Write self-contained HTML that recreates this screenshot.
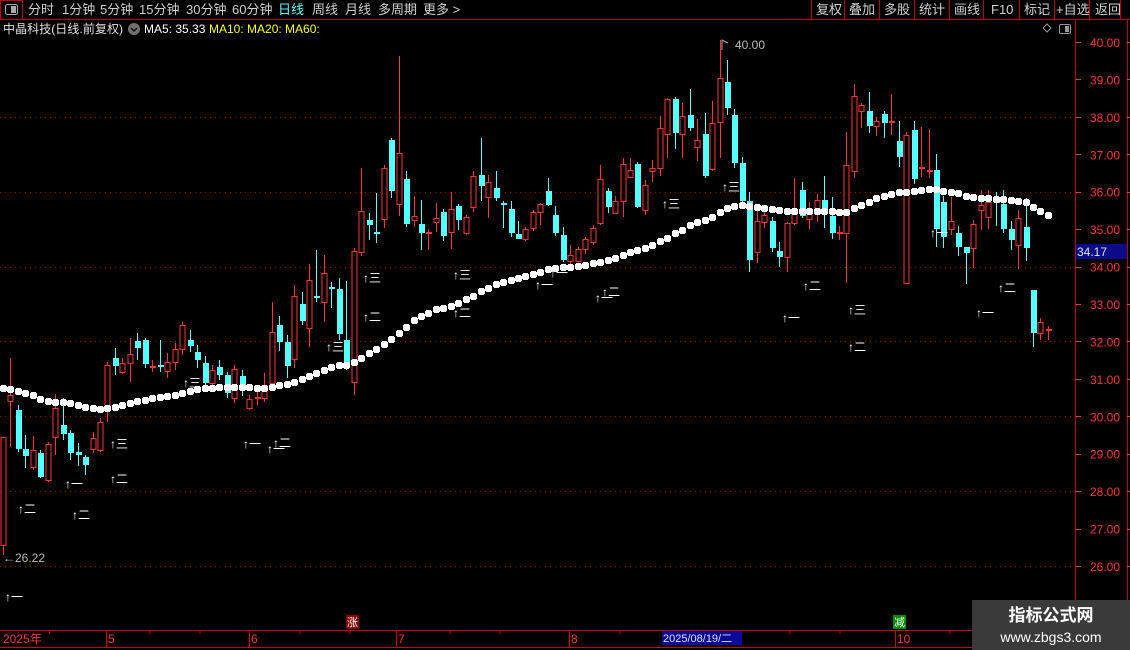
<!DOCTYPE html>
<html><head><meta charset="utf-8"><style>
html,body{margin:0;padding:0;background:#000;width:1130px;height:650px;overflow:hidden;font-family:"Liberation Sans","Noto Sans CJK SC",sans-serif}
</style></head><body>
<svg id="s" width="1130" height="650" style="position:absolute;left:0;top:0" xmlns="http://www.w3.org/2000/svg" font-family="Liberation Sans, Noto Sans CJK SC, sans-serif">
<rect width="1130" height="650" fill="#000"/>
<line x1="0" y1="19.5" x2="1130" y2="19.5" stroke="#c00000"/>
<rect x="0.5" y="0.5" width="22" height="19" fill="none" stroke="#c00000"/>
<rect x="5.5" y="4.5" width="12" height="10" rx="2" fill="none" stroke="#aaa"/>
<rect x="11" y="6" width="5" height="7" fill="#aaa"/>
<g font-size="13" fill="#d0d0d0">
<text x="28" y="14">分时</text><text x="62" y="14">1分钟</text><text x="100" y="14">5分钟</text><text x="139" y="14">15分钟</text><text x="186" y="14">30分钟</text><text x="232" y="14">60分钟</text><text x="278" y="14" fill="#54ffff">日线</text><text x="312" y="14">周线</text><text x="345" y="14">月线</text><text x="378" y="14">多周期</text><text x="423" y="14">更多 &gt;</text>
<text x="816" y="14">复权</text><text x="849" y="14">叠加</text><text x="884" y="14">多股</text><text x="919" y="14">统计</text><text x="954" y="14">画线</text><text x="991" y="14">F10</text><text x="1024" y="14">标记</text><text x="1056" y="14">+自选</text><text x="1095" y="14">返回</text>
</g>
<g stroke="#c00000">
<line x1="811.5" y1="0" x2="811.5" y2="19"/><line x1="844.5" y1="0" x2="844.5" y2="19"/><line x1="879.5" y1="0" x2="879.5" y2="19"/><line x1="914.5" y1="0" x2="914.5" y2="19"/><line x1="949.5" y1="0" x2="949.5" y2="19"/><line x1="983.5" y1="0" x2="983.5" y2="19"/><line x1="1019.5" y1="0" x2="1019.5" y2="19"/><line x1="1054.5" y1="0" x2="1054.5" y2="19"/><line x1="1089.5" y1="0" x2="1089.5" y2="19"/><line x1="1120.5" y1="0" x2="1120.5" y2="19"/>
</g>
<text x="3" y="33" font-size="12" fill="#e0e0e0" textLength="120">中晶科技(日线.前复权)</text>
<circle cx="134" cy="29" r="6" fill="#707070"/><path d="M131 28l3 3 3-3" stroke="#111" stroke-width="1.5" fill="none"/>
<text x="144" y="33" font-size="12" fill="#fff">MA5: 35.33</text>
<text x="209" y="33" font-size="12" fill="#ffff00">MA10: MA20: MA60:</text>
<path d="M1047 24l4 4-4 4-4-4z" fill="none" stroke="#999"/>
<rect x="1059.5" y="24.5" width="11" height="9" rx="1.5" fill="none" stroke="#999"/><rect x="1065" y="26" width="4" height="6" fill="#999"/>
<line x1="1075.5" y1="20" x2="1075.5" y2="650" stroke="#c00000"/>
<line x1="1127.5" y1="20" x2="1127.5" y2="650" stroke="#c00000"/>
<g id="grid"></g>
<g id="axis" font-size="12" fill="#ff3232"></g>
<rect x="1076" y="244" width="51" height="15" fill="#0a0a8a"/>
<text x="1077" y="256" font-size="12" fill="#e0e0e0">34.17</text>
<g id="cand"></g>
<g id="dots" fill="#fff"></g>
<g id="mk" font-size="12" fill="#fff"></g>
<path d="M722 50V40l6 3" stroke="#aaa" fill="none"/><text x="735" y="49" font-size="12" fill="#bbb">40.00</text>
<text x="3" y="562" font-size="12" fill="#bbb">←26.22</text>
<line x1="0" y1="630.5" x2="1075" y2="630.5" stroke="#d00000"/>
<line x1="0" y1="647.5" x2="1075" y2="647.5" stroke="#d00000"/>
<g stroke="#d00000"><line x1="49.5" y1="631" x2="49.5" y2="634"/><line x1="106.5" y1="631" x2="106.5" y2="647"/><line x1="249.5" y1="631" x2="249.5" y2="647"/><line x1="396.5" y1="631" x2="396.5" y2="647"/><line x1="569.5" y1="631" x2="569.5" y2="647"/><line x1="895.5" y1="631" x2="895.5" y2="647"/><line x1="150" y1="631" x2="150" y2="634"/><line x1="200" y1="631" x2="200" y2="634"/><line x1="300" y1="631" x2="300" y2="634"/><line x1="350" y1="631" x2="350" y2="634"/><line x1="450" y1="631" x2="450" y2="634"/><line x1="500" y1="631" x2="500" y2="634"/><line x1="620" y1="631" x2="620" y2="634"/><line x1="790" y1="631" x2="790" y2="634"/><line x1="840" y1="631" x2="840" y2="634"/><line x1="950" y1="631" x2="950" y2="634"/><line x1="1000" y1="631" x2="1000" y2="634"/></g>
<g font-size="12" fill="#ff3232"><text x="3" y="643">2025年</text><text x="108" y="643">5</text><text x="251" y="643">6</text><text x="398" y="643">7</text><text x="571" y="643">8</text><text x="897" y="643">10</text></g>
<rect x="662" y="631" width="80" height="14" fill="#0a0a9a"/><text x="663" y="642" font-size="11" fill="#e0e0e0">2025/08/19/二</text>
<rect x="346" y="615" width="13" height="14" fill="#8a0000"/><text x="347" y="626" font-size="11" fill="#fff">涨</text>
<rect x="893" y="615" width="13" height="14" fill="#008a00"/><text x="894" y="626" font-size="11" fill="#fff">减</text>
<rect x="972" y="600" width="158" height="50" fill="#3a3a3a"/>
<text x="1051" y="621" font-size="17" font-weight="bold" fill="#fff" text-anchor="middle">指标公式网</text>
<text x="1051" y="642" font-size="14" fill="#fff" text-anchor="middle">www.zbgs3.com</text>
</svg>
<script>
var NS="http://www.w3.org/2000/svg";
function el(g,t,a,txt){var e=document.createElementNS(NS,t);for(var k in a)e.setAttribute(k,a[k]);if(txt)e.textContent=txt;document.getElementById(g).appendChild(e);return e;}
function py(p){return 42+(40-p)*37.43;}
for(var p=26;p<=40;p++){var y=py(p);el('axis','line',{x1:1076,x2:1081,y1:Math.round(y)+.5,y2:Math.round(y)+.5,stroke:'#ff3232'});
 el('axis','text',{x:1090,y:y+5},p.toFixed(2));
 el('axis','line',{x1:1127,x2:1130,y1:Math.round(y)+.5,y2:Math.round(y)+.5,stroke:'#ff3232'});
 if(p%2==0&&p<40)el('grid','line',{x1:0,x2:1075,y1:Math.round(y)+.5,y2:Math.round(y)+.5,stroke:'#a00000','stroke-dasharray':'1,4'});}
var D=[
['r',437,545,437,555],['r',395,401,358,447],['c',410,449,405,452],['c',449,456,435,468],['r',450,467,436,470],['c',453,477,450,478],['r',444,480,442,482],['r',408,437,394,455],['c',425,434,398,440],['c',433,453,430,460],
['c',452,455,443,466],['c',457,465,455,475],['r',438,449,432,453],['r',422,450,418,452],['r',365,407,362,422],['c',358,366,348,375],['r',363,372,358,374],['r',354,363,338,382],['c',341,348,333,360],['c',340,364,338,368],
['r',366,368,360,372],['c',365,367,340,372],['r',362,371,353,378],['r',349,362,343,370],['r',325,349,322,355],['c',340,346,330,352],['c',352,360,345,368],['c',363,383,356,387],['r',370,383,365,388],['c',367,375,360,380],
['c',375,393,372,398],['r',369,398,365,403],['c',376,390,370,396],['r',399,408,395,410],['r',397,399,390,405],['r',385,398,373,402],['r',332,383,302,385],['c',325,342,316,351],['c',342,366,335,378],['r',296,359,285,368],
['c',304,321,292,325],['r',280,328,264,347],['c',296,298,250,302],['r',273,302,255,322],['c',287,289,282,308],['c',289,334,278,340],['c',340,368,281,370],['r',251,382,248,395],['r',211,252,168,256],['c',220,225,213,240],
['c',232,234,193,243],['r',168,219,165,228],['c',140,191,138,198],['r',153,204,56,216],['c',179,224,171,227],['r',216,220,196,227],['c',224,233,200,250],['r',232,233,229,250],['r',218,222,203,232],['c',212,236,209,241],
['r',209,232,192,249],['c',206,220,204,230],['r',217,233,215,235],['r',176,207,171,212],['c',175,186,138,201],['r',182,197,175,218],['c',188,198,171,201],['c',203,205,201,228],['c',209,233,201,237],['c',234,239,221,239],
['r',229,239,227,241],['r',212,228,210,231],['r',204,212,203,225],['c',191,205,178,206],['c',215,233,206,236],['c',235,260,227,262],['r',255,261,245,265],['r',249,261,247,262],['r',239,249,237,254],['r',228,242,225,245],
['r',179,223,165,225],['c',191,207,188,213],['r',201,213,196,213],['r',164,201,158,217],['r',170,177,158,178],['c',164,207,162,208],['r',185,210,180,215],['r',168,171,160,182],['r',128,168,116,176],['r',99,134,98,158],
['c',99,133,97,149],['r',116,134,103,158],['c',115,128,89,131],['r',140,147,119,161],['c',134,176,113,178],['r',123,169,101,171],['r',78,122,40,158],['c',82,108,60,115],['c',115,163,109,168],['c',163,201,157,203],
['c',201,260,192,272],['r',221,252,209,263],['r',215,222,209,228],['c',221,248,217,252],['c',251,257,242,267],['r',223,257,222,272],['r',214,223,178,225],['c',190,216,182,218],['r',213,219,202,229],['r',200,213,194,222],
['c',200,213,176,228],['c',216,233,197,239],['r',232,234,226,240],['r',165,233,132,283],['r',96,171,84,178],['r',105,111,103,128],['c',111,126,92,133],['r',121,126,117,136],['c',114,123,111,138],['r',121,123,94,135],
['c',141,157,121,167],['r',135,283,132,283],['c',130,179,121,184],['r',167,169,127,177],['r',170,172,129,178],['c',170,229,154,247],['c',202,237,196,248],['r',221,229,197,235],['c',233,247,226,256],['c',247,253,247,284],
['r',224,248,220,268],['r',205,210,190,230],['r',202,217,190,229],['c',201,203,192,226],['c',204,229,190,233],['c',229,240,221,250],['r',218,245,210,269],['c',227,248,198,261],['c',290,333,290,347],['r',322,333,318,340],['r',329,331,326,340]];
D.forEach(function(d,i){var x=Math.round(3+i*7.464);var col=d[0]=='r'?'#ff3232':'#54ffff';
 el('cand','line',{x1:x+.5,x2:x+.5,y1:d[3],y2:d[4],stroke:col});
 var h=Math.max(1,d[2]-d[1]);
 if(d[0]=='r'){ if(h<3) el('cand','rect',{x:x-2,y:d[1],width:6,height:2,fill:col}); else el('cand','rect',{x:x-2,y:d[1]+.5,width:5,height:h,fill:'#000',stroke:col});}
 else el('cand','rect',{x:x-2,y:d[1],width:6,height:Math.max(2,h),fill:col});
});
var K=[[0,388],[34,389],[55,391],[79,393],[100,395],[124,400],[145,401],[166,402],[190,402],[211,403],[235,405],[256,407],[280,408],[301,409],[325,408],[346,407],[370,405],[391,403],[415,401],[436,400],[460,398],[482,397],[502,396],[526,395],[547,393],[571,391],[592,389],[616,388],[682,387],[727,387],[796,388]].map(function(a){return [a[0]/3,a[1]];});
K=K.concat([[272,387],[279,385],[287,384],[294,382],[302,379],[309,376],[317,373],[324,370],[332,367],[339,365],[347,365],[354,362],[362,357],[369,353],[377,348],[385,343],[392,338],[400,332],[407,326],[415,319],[422,315],[430,312],[437,309],[444,308],[451,306],[459,302],[466,299],[474,296],[481,291],[488,288],[496,284],[503,282],[511,280],[518,278],[526,276],[533,274],[541,272],[548,269],[556,268],[563,267],[571,267],[578,266],[586,265],[593,263],[600,262],[608,260],[615,258],[623,255],[630,252],[638,250],[645,248],[653,245],[660,241],[668,237],[675,233],[683,229],[690,225],[698,222],[705,220],[712,217],[720,212],[727,208],[735,206],[742,205],[750,206],[757,207],[765,208],[772,209],[780,210],[787,211],[832,211],[839,212],[847,212],[854,208],[862,205],[869,202],[877,197],[884,196],[892,194],[899,192],[907,192],[914,191],[921,190],[929,189],[936,189],[944,191],[951,192],[959,193],[966,196],[974,197],[981,198],[1004,199],[1011,200],[1019,201],[1026,202],[1033,207],[1041,211],[1048,215]]);
K.sort(function(a,b){return a[0]-b[0];});
function iy(x){for(var j=0;j<K.length-1;j++){if(x<=K[j+1][0]){var t=(x-K[j][0])/((K[j+1][0]-K[j][0])||1);return K[j][1]+t*(K[j+1][1]-K[j][1]);}}return K[K.length-1][1];}
for(var i=0;i<141;i++){var x=Math.round(3+i*7.464),y=Math.round(iy(x));
 el('dots','rect',{x:x-3,y:y-2,width:7,height:5});el('dots','rect',{x:x-2,y:y-3,width:5,height:7});}
var M=[[5,601,'一'],[18,513,'二'],[72,519,'二'],[65,488,'一'],[110,448,'三'],[110,483,'二'],[183,387,'三'],[243,448,'一'],[267,453,'一'],[273,447,'二'],[326,351,'三'],[363,282,'三'],[363,321,'二'],[453,279,'三'],[453,317,'二'],[535,289,'一'],[550,277,'一'],[595,302,'一'],[602,296,'二'],[662,208,'三'],[722,191,'三'],[803,290,'二'],[782,322,'一'],[848,314,'三'],[848,351,'二'],[930,237,'一'],[998,292,'二'],[976,317,'一']];
M.forEach(function(m){el('mk','text',{x:m[0],y:m[1],'font-size':12},'↑');el('mk','text',{x:m[0]+6,y:m[1]},m[2]);});
</script>
</body></html>
